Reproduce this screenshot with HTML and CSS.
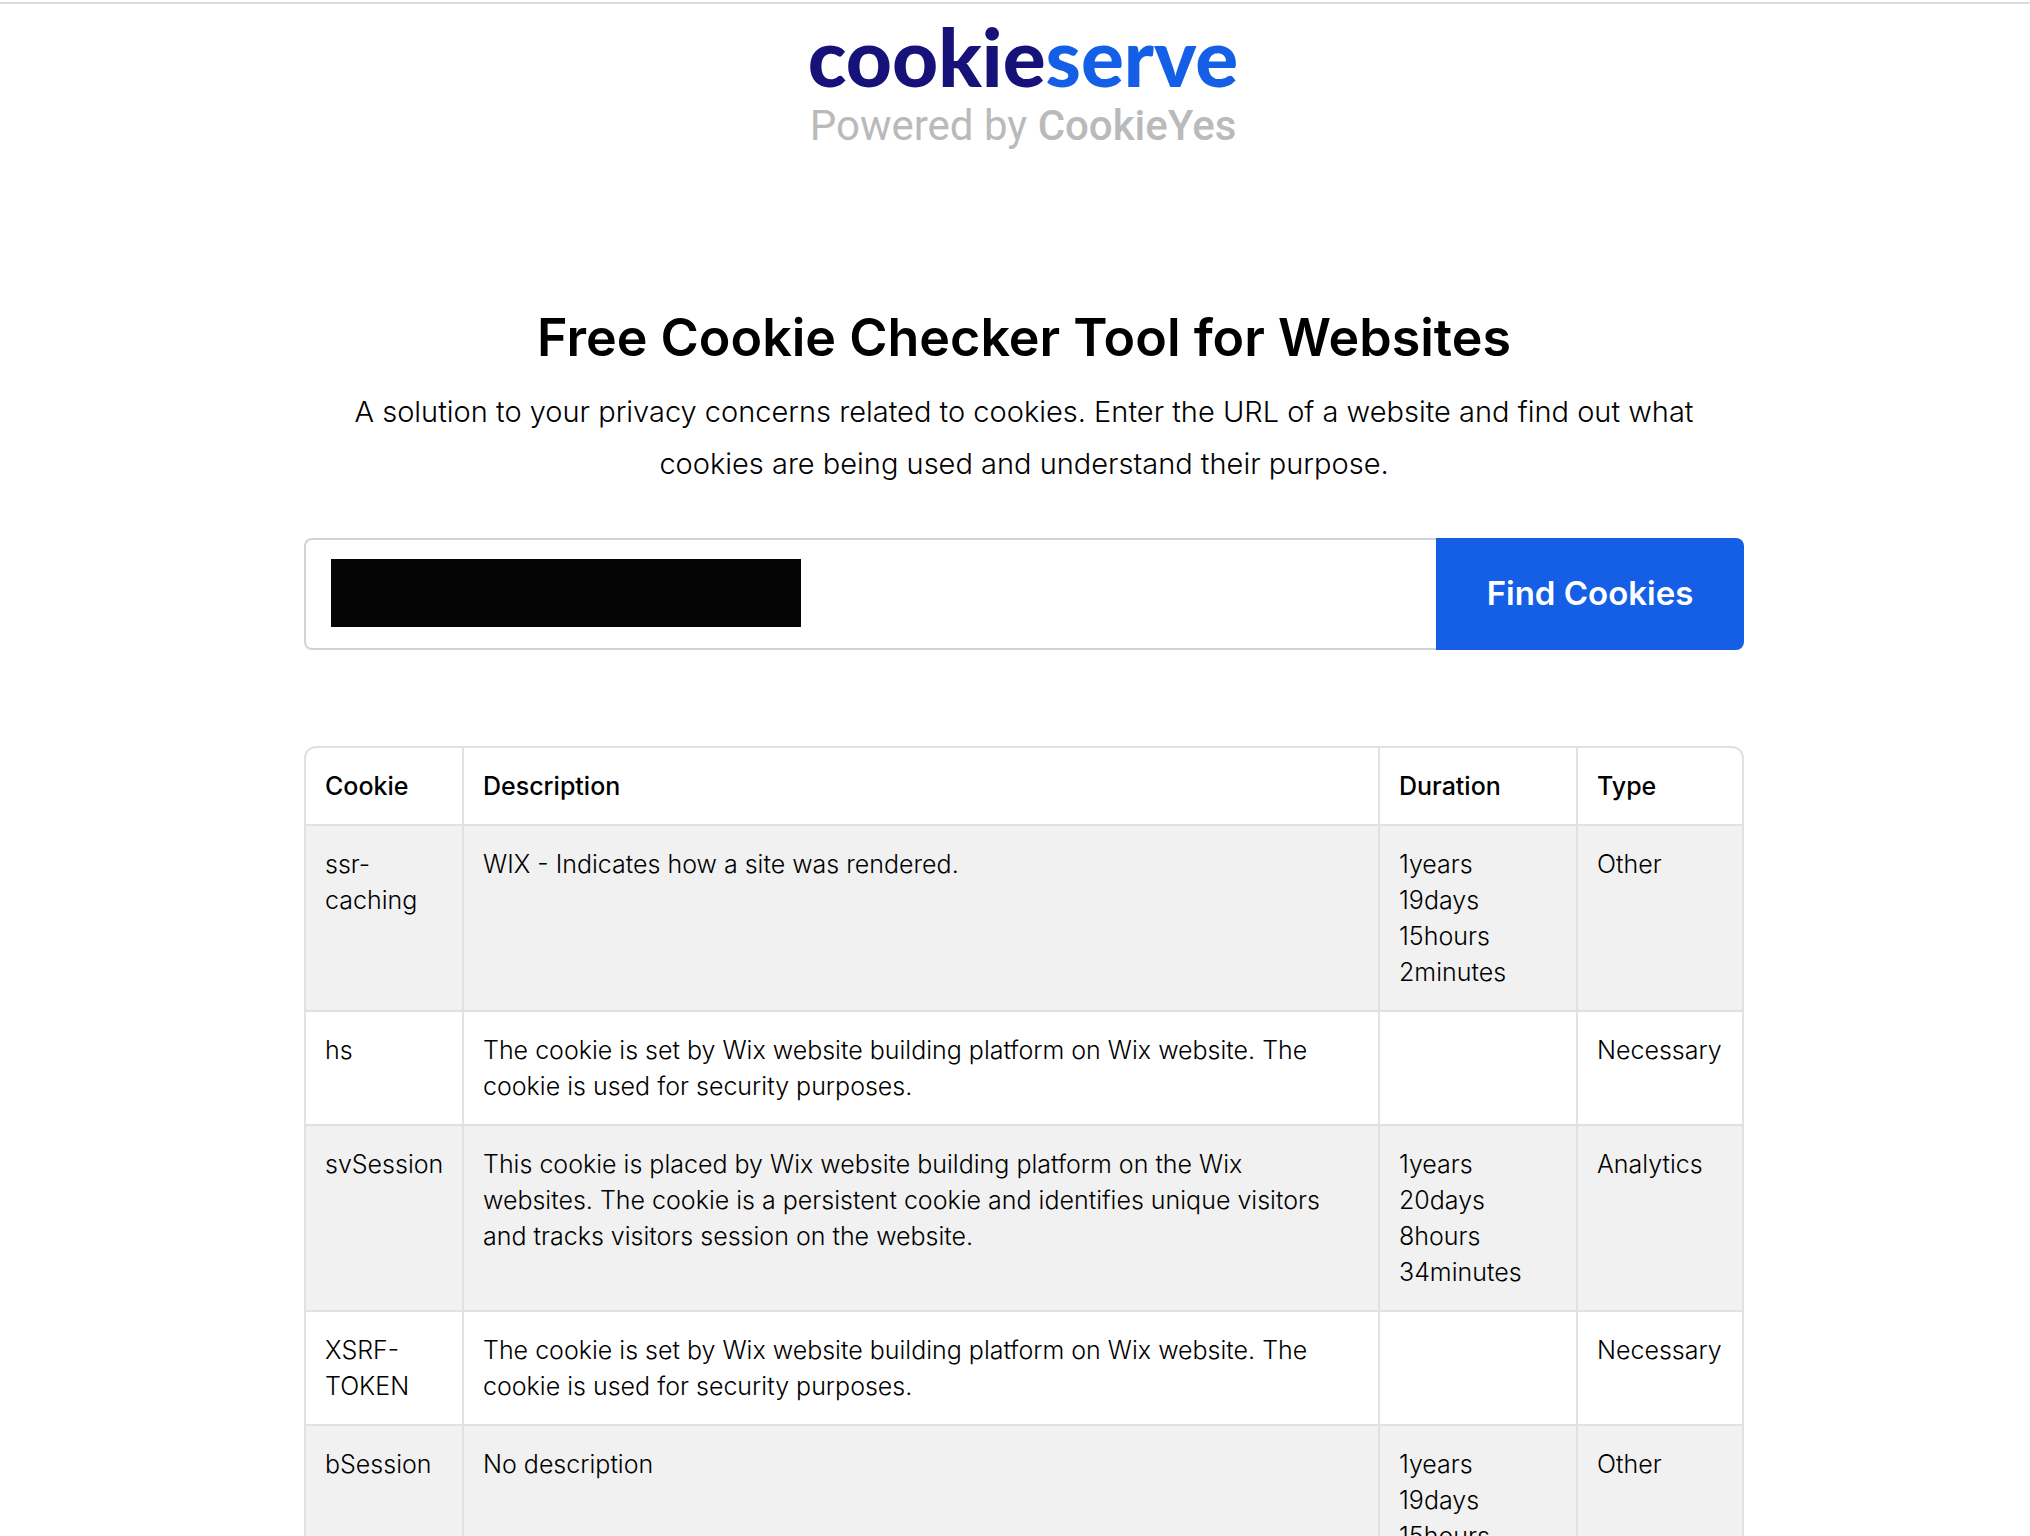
FILE: index.html
```html
<!DOCTYPE html>
<html lang="en">
<head>
    <meta charset="UTF-8">
    <meta name="viewport" content="width=device-width, initial-scale=1.0">
    <title>Free Cookie Checker Tool for Websites</title>
    <link rel="stylesheet" href="styles.css">
</head>
<body>
<header class="site-header">
    <a class="logo" href="#">
        <span class="logo-name">cookie<span class="logo-serve">serve</span></span>
        <span class="logo-powered">Powered by <b>CookieYes</b></span>
    </a>
</header>
<main class="container">
    <section class="intro">
        <h1>Free Cookie Checker Tool for Websites</h1>
        <p>A solution to your privacy concerns related to cookies. Enter the URL of a website and find out what<br>
            cookies are being used and understand their purpose.</p>
    </section>
    <form class="search-form">
        <div class="search-box">
            <input type="text" class="search-input" aria-label="Website URL">
            <span class="url-mask"></span>
        </div>
        <button type="submit" class="search-btn">Find Cookies</button>
    </form>
    <table class="cookie-table">
        <colgroup>
            <col class="col-cookie">
            <col>
            <col class="col-duration">
            <col class="col-type">
        </colgroup>
        <thead>
        <tr>
            <th scope="col">Cookie</th>
            <th scope="col">Description</th>
            <th scope="col">Duration</th>
            <th scope="col">Type</th>
        </tr>
        </thead>
        <tbody>
        <tr>
            <td>ssr-<br>caching</td>
            <td>WIX - Indicates how a site was rendered.</td>
            <td>1years<br>19days<br>15hours<br>2minutes</td>
            <td>Other</td>
        </tr>
        <tr>
            <td>hs</td>
            <td>The cookie is set by Wix website building platform on Wix website. The<br>cookie is used for security purposes.</td>
            <td></td>
            <td>Necessary</td>
        </tr>
        <tr>
            <td>svSession</td>
            <td>This cookie is placed by Wix website building platform on the Wix<br>websites. The cookie is a persistent cookie and identifies unique visitors<br>and tracks visitors session on the website.</td>
            <td>1years<br>20days<br>8hours<br>34minutes</td>
            <td>Analytics</td>
        </tr>
        <tr>
            <td>XSRF-<br>TOKEN</td>
            <td>The cookie is set by Wix website building platform on Wix website. The<br>cookie is used for security purposes.</td>
            <td></td>
            <td>Necessary</td>
        </tr>
        <tr>
            <td>bSession</td>
            <td>No description</td>
            <td>1years<br>19days<br>15hours</td>
            <td>Other</td>
        </tr>
        </tbody>
    </table>
</main>
</body>
</html>
```
FILE: styles.css
```css
* {
    box-sizing: border-box;
}

body {
    margin: 0;
    padding: 2px 0 0 18px;
    font-family: Inter, "Open Sans", sans-serif;
    font-weight: 300;
    color: #000;
    background-color: #fff;
}

.site-header {
    margin-left: -18px;
    padding: 8px 0 0 16px;
    border-top: 2px solid #dcdce4;
    text-align: center;
}

.logo {
    display: inline-block;
    text-decoration: none;
}

.logo-name {
    display: block;
    font-family: Lato, sans-serif;
    font-size: 80px;
    line-height: 88px;
    font-weight: 900;
    color: #17117a;
}

.logo-serve {
    color: #145fe6;
}

.logo-powered {
    display: block;
    font-family: Roboto, sans-serif;
    font-size: 42px;
    line-height: 52px;
    font-weight: 400;
    color: #bababa;
}

.logo-powered b {
    font-weight: 500;
}

.container {
    max-width: 1440px;
    margin: 0 auto;
}

.intro {
    padding-top: 154px;
    text-align: center;
}

.intro h1 {
    margin: 0;
    font-size: 52px;
    line-height: 64px;
    font-weight: 600;
}

.intro p {
    margin: 16px 0 48px;
    font-size: 29px;
    line-height: 52px;
}

.search-form {
    display: flex;
    margin-bottom: 96px;
}

.search-box {
    position: relative;
    flex: 1;
}

.search-input {
    display: block;
    width: 100%;
    height: 112px;
    padding: 0 24px;
    border: 2px solid #ced4da;
    border-right: 0;
    border-radius: 8px 0 0 8px;
    font-family: inherit;
    font-size: 33px;
    outline: none;
}

.url-mask {
    position: absolute;
    top: 21px;
    left: 27px;
    width: 470px;
    height: 68px;
    background-color: #050505;
}

.search-btn {
    width: 308px;
    padding-bottom: 4px;
    border: 0;
    border-radius: 0 8px 8px 0;
    font-family: inherit;
    font-size: 33px;
    font-weight: 600;
    color: #fff;
    background-color: #145fe6;
    cursor: pointer;
}

.cookie-table {
    width: 100%;
    table-layout: fixed;
    border-collapse: separate;
    border-spacing: 0;
    border: 2px solid #dee2e6;
    border-radius: 12px;
    font-size: 25px;
    line-height: 36px;
}

.col-cookie {
    width: 156px;
}

.col-duration {
    width: 198px;
}

.col-type {
    width: 166px;
}

.cookie-table th,
.cookie-table td {
    padding: 20px 0 20px 19px;
    border-left: 2px solid #dee2e6;
    text-align: left;
    vertical-align: top;
}

.cookie-table th {
    font-weight: 500;
}

.cookie-table td {
    border-top: 2px solid #dee2e6;
}

.cookie-table th:first-child,
.cookie-table td:first-child {
    border-left: 0;
}

.cookie-table tbody tr:nth-child(odd) {
    background-color: #f1f1f1;
}
```
